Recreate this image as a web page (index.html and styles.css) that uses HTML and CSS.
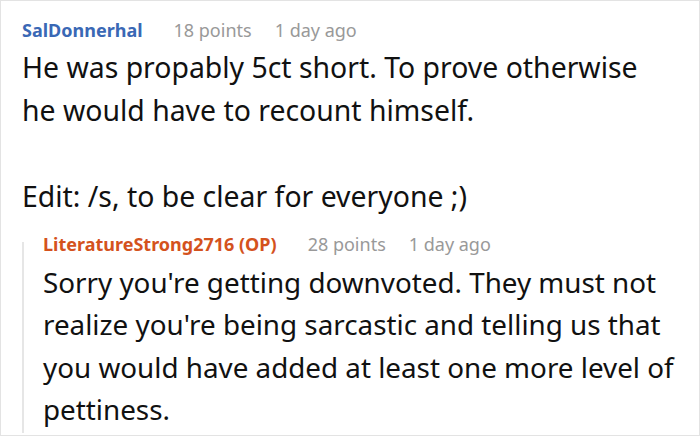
FILE: index.html
```html
<!DOCTYPE html>
<html>
<head>
<meta charset="utf-8">
<link rel="stylesheet" href="styles.css">
</head>
<body>
<div class="thread">
  <div class="comment">
    <div class="meta">
      <span class="author">SalDonnerhal</span>
      <span class="points">18 points</span>
      <span class="time">1 day ago</span>
    </div>
    <div class="text">
      <p>He was propably 5ct short. To prove otherwise<br>he would have to recount himself.</p>
      <p class="blank">&nbsp;</p>
      <p>Edit: /s, to be clear for everyone ;)</p>
    </div>
    <div class="reply">
      <div class="meta">
        <span class="author op">LiteratureStrong2716 (OP)</span>
        <span class="points">28 points</span>
        <span class="time">1 day ago</span>
      </div>
      <div class="text reply-text">
        <p>Sorry you're getting downvoted. They must not realize you're being sarcastic and telling us that you would have added at least one more level of pettiness.</p>
      </div>
    </div>
  </div>
</div>
</body>
</html>
```

FILE: styles.css
```css
html, body {
  margin: 0;
  padding: 0;
  background: #fff;
}
.thread {
  box-sizing: border-box;
  width: 700px;
  height: 436px;
  border: 1px solid #e3e3e3;
  overflow: hidden;
  font-family: "Noto Sans", "Open Sans", sans-serif;
  color: #111;
}
.comment {
  padding: 17px 0 0 21px;
}
.meta {
  display: flex;
  align-items: baseline;
  font-size: 18px;
  line-height: 24px;
  white-space: nowrap;
}
.author {
  font-weight: 700;
  color: #3a68b5;
  margin-right: 31px;
}
.author.op {
  color: #d4521d;
}
.points {
  color: #999;
  margin-right: 23px;
}
.time {
  color: #999;
}
.text {
  font-size: 28.4px;
  line-height: 43px;
  margin-top: 4px;
}
.text p {
  margin: 0;
}
.reply {
  position: relative;
  margin-top: 14px;
  padding-left: 21px;
}
.reply::before {
  content: "";
  position: absolute;
  left: 0;
  top: 10px;
  bottom: -2px;
  width: 2px;
  background: #e6e6e6;
}
.reply-text {
  font-size: 27.8px;
  line-height: 42.4px;
  margin-top: 5px;
  padding-right: 8px;
}
```
